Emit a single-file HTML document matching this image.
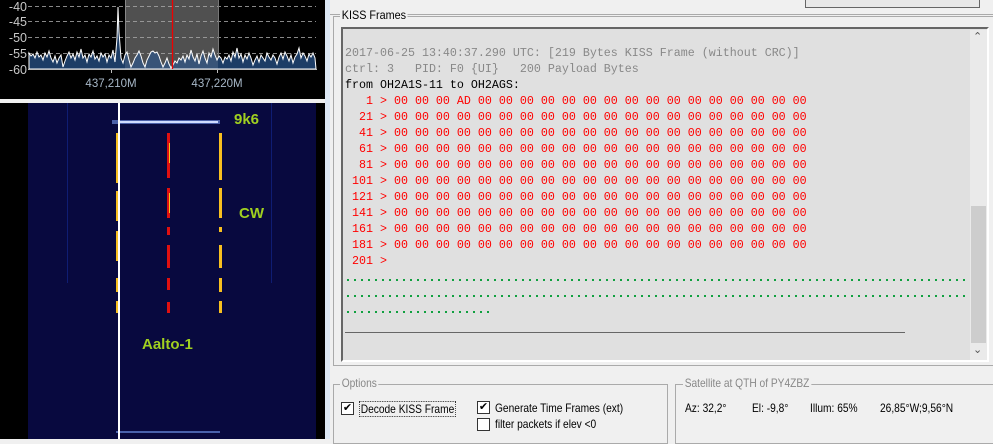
<!DOCTYPE html>
<html><head><meta charset="utf-8"><style>
*{margin:0;padding:0;box-sizing:border-box}
body{width:993px;height:439px;overflow:hidden;background:#f0f0f0;position:relative;font-family:"Liberation Sans",sans-serif}
.a{position:absolute}
.mono{font-family:"Liberation Mono",monospace;font-size:11.67px;white-space:pre;line-height:16px}
.dots{height:2px;background:repeating-linear-gradient(90deg,#10a040 0 2px,transparent 2px 7px)}
.cb{position:absolute;width:13px;height:13px;border:1px solid #333;background:#fff;font-size:11px;line-height:11px;text-align:center;color:#000}
.lbl{position:absolute;font-size:12px;color:#000;transform:scaleX(.85);transform-origin:left}
</style></head><body>
<div class="a" style="left:0;top:0;width:325px;height:439px;background:#000"></div>
<div class="a" style="left:325px;top:0;width:5px;height:439px;background:#dde8f5"></div>
<svg class="a" style="left:0;top:0" width="325" height="100">
<rect x="125" y="0" width="93" height="69" fill="#383838"/>
<g stroke="#888" stroke-dasharray="4,3" stroke-width="1">
<line x1="28" y1="6.5" x2="316" y2="6.5"/><line x1="28" y1="21.5" x2="316" y2="21.5"/><line x1="28" y1="37.5" x2="316" y2="37.5"/><line x1="28" y1="53.5" x2="316" y2="53.5"/></g>
<line x1="125.5" y1="0" x2="125.5" y2="69" stroke="#777"/><line x1="218.5" y1="0" x2="218.5" y2="69" stroke="#777"/>
<path d="M29,69 L29,53 31,56 33,54 35,58 37,52 39,57 41,55 43,60 45,53 47,57 49,51 51,58 53,62 55,56 57,63 59,58 61,55 63,67 65,61 67,56 69,52 71,58 73,54 75,60 77,52 79,57 81,49 83,58 85,55 87,62 89,54 91,57 93,51 95,59 97,56 99,61 101,53 103,57 105,54 107,62 109,55 111,58 113,50 115,62 117,38 118,7 119,32 120,45 121,58 123,63 125,55 127,52 129,60 131,67 133,63 135,58 137,55 139,51 141,56 143,63 145,67 147,60 149,56 151,52 153,51 155,53 157,52 159,56 161,62 163,67 165,63 167,58 169,64 171,68 173,65 175,61 177,63 179,58 181,60 183,56 185,62 187,55 189,59 191,50 193,57 195,61 197,54 199,64 201,56 203,51 205,58 207,63 209,53 211,57 213,49 215,55 217,60 219,56 221,58 223,63 225,57 227,59 229,55 231,61 233,52 235,57 237,48 239,58 241,54 243,62 245,55 247,59 249,53 251,58 253,65 255,60 257,56 259,62 261,55 263,58 265,61 267,53 269,57 271,60 273,55 275,58 277,64 279,57 281,53 283,59 285,52 287,56 289,61 291,55 293,63 295,57 297,54 299,48 301,58 303,53 305,56 307,61 309,54 311,57 313,53 315,58 316,69 Z" fill="#1d3d66" stroke="#fff" stroke-width="1"/>
<rect x="125" y="0" width="93" height="69" fill="#fff" opacity=".12"/>
<line x1="172.5" y1="0" x2="172.5" y2="69" stroke="#e00" stroke-width="1.3"/>
<line x1="28" y1="69.5" x2="317" y2="69.5" stroke="#bbb"/>
<line x1="111.5" y1="69" x2="111.5" y2="73" stroke="#bbb"/><line x1="217.5" y1="69" x2="217.5" y2="73" stroke="#bbb"/>
<g fill="#c8c8c8" font-family="Liberation Sans" font-size="12.5" text-anchor="end">
<text x="27" y="11">-40</text><text x="27" y="26">-45</text><text x="27" y="42">-50</text><text x="27" y="58">-55</text><text x="27" y="74">-60</text></g>
<g fill="#a8b8c8" font-family="Liberation Sans" font-size="11.5" text-anchor="middle">
<text x="111" y="87">437,210M</text><text x="217" y="87">437,220M</text></g>
</svg>
<div class="a" style="left:0;top:99px;width:325px;height:4px;background:#f0f0f0"></div>
<svg class="a" style="left:0;top:103px" width="325" height="336">
<rect x="28" y="0" width="288" height="336" fill="#08093f"/>
<rect x="112" y="17" width="108" height="4" fill="#6a88d8" opacity=".7"/>
<rect x="118" y="18" width="100" height="2" fill="#d0dcff"/>
<rect x="116" y="328" width="104" height="2" fill="#5a78c8" opacity=".8"/>
<g stroke="#12268a" stroke-width="1" opacity=".7"><line x1="67.5" y1="0" x2="67.5" y2="180"/><line x1="271.5" y1="0" x2="271.5" y2="180"/></g>
<g fill="#e01010"><rect x="167" y="30" width="3" height="45"/><rect x="167" y="85" width="3" height="30"/><rect x="167" y="124" width="3" height="8"/><rect x="167" y="142" width="3" height="23"/><rect x="167" y="175" width="3" height="12"/><rect x="167" y="199" width="3" height="11"/></g>
<g fill="#f8c020"><rect x="219" y="30" width="3" height="47"/><rect x="219" y="85" width="3" height="30"/><rect x="219" y="124" width="3" height="5"/><rect x="219" y="142" width="3" height="23"/><rect x="219" y="175" width="3" height="14"/><rect x="219" y="198" width="3" height="12"/>
<rect x="116" y="30" width="3" height="50"/><rect x="116" y="88" width="3" height="30"/><rect x="116" y="128" width="3" height="30"/><rect x="116" y="175" width="3" height="14"/><rect x="116" y="198" width="3" height="12"/>
<rect x="169" y="40" width="1" height="20"/><rect x="169" y="90" width="1" height="20"/></g>
<rect x="118" y="0" width="2" height="336" fill="#fff"/>
<g fill="#a0d020" font-family="Liberation Sans" font-weight="bold" font-size="15"><text x="234" y="21">9k6</text><text x="239" y="115">CW</text><text x="142" y="246">Aalto-1</text></g>
</svg>
<div class="a" style="left:805px;top:-2px;width:175px;height:10px;border:1px solid #666;border-top:none;background:#e8e8e8"></div>
<div class="a" style="left:330px;top:14px;width:663px;height:1px;background:#aaa"></div>
<div class="a" style="left:333px;top:16px;width:660px;height:350px;border:1px solid #aaa;border-right:none"></div>
<div class="a" style="left:340px;top:8px;background:#f0f0f0;padding:0 2px;font-size:12px;color:#000;transform:scaleX(.9);transform-origin:left">KISS Frames</div>
<div class="a" style="left:341px;top:27px;width:648px;height:335px;background:#e0e0e0;border:2px solid #666;border-right-color:#fff;border-bottom-color:#fff"></div>
<div class="a" style="left:970px;top:30px;width:17px;height:330px;background:#eaeaea"></div>
<div class="a" style="left:971px;top:206px;width:15px;height:137px;background:#cdcdcd"></div>
<div class="a" style="left:973px;top:30px;font-size:11px;color:#555">&#8963;</div>
<div class="a" style="left:973px;top:343px;font-size:11px;color:#555">&#8964;</div>
<div class="a mono" style="left:345px;top:45px;color:#888">2017-06-25 13:40:37.290 UTC: [219 Bytes KISS Frame (without CRC)]
ctrl: 3   PID: F0 {UI}   200 Payload Bytes</div>
<div class="a mono" style="left:345px;top:77px;color:#000">from OH2A1S-11 to OH2AGS:</div>
<div class="a mono" style="left:345px;top:93px;color:#f00">   1 &gt; 00 00 00 AD 00 00 00 00 00 00 00 00 00 00 00 00 00 00 00 00
  21 &gt; 00 00 00 00 00 00 00 00 00 00 00 00 00 00 00 00 00 00 00 00
  41 &gt; 00 00 00 00 00 00 00 00 00 00 00 00 00 00 00 00 00 00 00 00
  61 &gt; 00 00 00 00 00 00 00 00 00 00 00 00 00 00 00 00 00 00 00 00
  81 &gt; 00 00 00 00 00 00 00 00 00 00 00 00 00 00 00 00 00 00 00 00
 101 &gt; 00 00 00 00 00 00 00 00 00 00 00 00 00 00 00 00 00 00 00 00
 121 &gt; 00 00 00 00 00 00 00 00 00 00 00 00 00 00 00 00 00 00 00 00
 141 &gt; 00 00 00 00 00 00 00 00 00 00 00 00 00 00 00 00 00 00 00 00
 161 &gt; 00 00 00 00 00 00 00 00 00 00 00 00 00 00 00 00 00 00 00 00
 181 &gt; 00 00 00 00 00 00 00 00 00 00 00 00 00 00 00 00 00 00 00 00
 201 &gt;</div>
<div class="a dots" style="left:347px;top:279px;width:621px"></div>
<div class="a dots" style="left:347px;top:295px;width:621px"></div>
<div class="a dots" style="left:347px;top:311px;width:145px"></div>
<div class="a" style="left:345px;top:332px;width:560px;height:1px;background:#666"></div>
<div class="a" style="left:333px;top:384px;width:335px;height:60px;border:1px solid #aaa"></div>
<div class="a" style="left:340px;top:376px;background:#f0f0f0;padding:0 2px;font-size:12px;color:#888;transform:scaleX(.85);transform-origin:left">Options</div>
<div class="cb" style="left:341px;top:402px">&#10004;</div>
<div class="lbl" style="left:359px;top:401px;border:1px dotted #333;padding:0 1px">Decode KISS Frame</div>
<div class="cb" style="left:477px;top:401px">&#10004;</div>
<div class="lbl" style="left:495px;top:401px">Generate Time Frames (ext)</div>
<div class="cb" style="left:477px;top:418px"></div>
<div class="lbl" style="left:495px;top:417px">filter packets if elev &lt;0</div>
<div class="a" style="left:675px;top:384px;width:320px;height:60px;border:1px solid #aaa"></div>
<div class="a" style="left:683px;top:376px;background:#f0f0f0;padding:0 2px;font-size:12px;color:#888;transform:scaleX(.85);transform-origin:left">Satellite at QTH of PY4ZBZ</div>
<div class="lbl" style="left:685px;top:401px">Az: 32,2°</div>
<div class="lbl" style="left:752px;top:401px">El: -9,8°</div>
<div class="lbl" style="left:810px;top:401px">Illum: 65%</div>
<div class="lbl" style="left:880px;top:401px">26,85°W;9,56°N</div>
</body></html>
